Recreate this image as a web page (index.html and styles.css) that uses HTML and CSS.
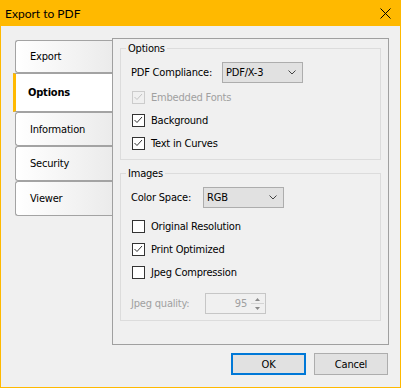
FILE: index.html
```html
<!DOCTYPE html>
<html>
<head>
<meta charset="utf-8">
<link rel="stylesheet" href="styles.css">
</head>
<body>
<div class="window">
  <div class="titlebar">
    <span class="title">Export to PDF</span>
    <svg class="close" width="11" height="11" viewBox="0 0 11 11"><path d="M0.5 0.5 L10.5 10.5 M10.5 0.5 L0.5 10.5" stroke="#000" stroke-width="1" fill="none"/></svg>
  </div>
  <div class="content">
    <div class="main">
      <div class="tabs">
        <div class="tab tab-export">Export</div>
        <div class="tab tab-active">Options</div>
        <div class="tab tab-info">Information</div>
        <div class="tab tab-sec">Security</div>
        <div class="tab tab-viewer">Viewer</div>
      </div>
      <div class="panel">
        <div class="group group-options">
          <span class="group-title">Options</span>
          <div class="row row-field">
            <span class="label label-compliance">PDF Compliance:</span>
            <div class="select"><span>PDF/X-3</span><svg class="chev" width="8" height="5" viewBox="0 0 8 5"><path d="M0.5 0.5 L4 4 L7.5 0.5" fill="none" stroke="#444"/></svg></div>
          </div>
          <div class="row row-check first-check disabled">
            <svg class="cb" width="13" height="13" viewBox="0 0 13 13"><rect x="0.5" y="0.5" width="12" height="12" fill="none" stroke="#cccccc"/><path d="M2.5 6 L5 8.5 L10 3" fill="none" stroke="#c4c4c4"/></svg>
            <span>Embedded Fonts</span>
          </div>
          <div class="row row-check">
            <svg class="cb" width="13" height="13" viewBox="0 0 13 13"><rect x="0.5" y="0.5" width="12" height="12" fill="#fff" stroke="#333"/><path d="M2.5 6 L5 8.5 L10 3" fill="none" stroke="#333"/></svg>
            <span>Background</span>
          </div>
          <div class="row row-check">
            <svg class="cb" width="13" height="13" viewBox="0 0 13 13"><rect x="0.5" y="0.5" width="12" height="12" fill="#fff" stroke="#333"/><path d="M2.5 6 L5 8.5 L10 3" fill="none" stroke="#333"/></svg>
            <span>Text in Curves</span>
          </div>
        </div>
        <div class="group group-images">
          <span class="group-title">Images</span>
          <div class="row row-field">
            <span class="label label-color">Color Space:</span>
            <div class="select"><span>RGB</span><svg class="chev" width="8" height="5" viewBox="0 0 8 5"><path d="M0.5 0.5 L4 4 L7.5 0.5" fill="none" stroke="#444"/></svg></div>
          </div>
          <div class="row row-check first-check-img">
            <svg class="cb" width="13" height="13" viewBox="0 0 13 13"><rect x="0.5" y="0.5" width="12" height="12" fill="#fff" stroke="#333"/></svg>
            <span>Original Resolution</span>
          </div>
          <div class="row row-check">
            <svg class="cb" width="13" height="13" viewBox="0 0 13 13"><rect x="0.5" y="0.5" width="12" height="12" fill="#fff" stroke="#333"/><path d="M2.5 6 L5 8.5 L10 3" fill="none" stroke="#333"/></svg>
            <span>Print Optimized</span>
          </div>
          <div class="row row-check">
            <svg class="cb" width="13" height="13" viewBox="0 0 13 13"><rect x="0.5" y="0.5" width="12" height="12" fill="#fff" stroke="#333"/></svg>
            <span>Jpeg Compression</span>
          </div>
          <div class="row row-field row-spin disabled">
            <span class="label label-quality">Jpeg quality:</span>
            <div class="spin">
              <span class="spin-value">95</span>
              <div class="spin-btns">
                <div class="spin-btn"><svg width="5" height="3" viewBox="0 0 5 3"><path d="M2.5 0 L5 3 L0 3 Z" fill="#8a8a8a"/></svg></div>
                <div class="spin-btn spin-down"><svg width="5" height="3" viewBox="0 0 5 3"><path d="M0 0 L5 0 L2.5 3 Z" fill="#8a8a8a"/></svg></div>
              </div>
            </div>
          </div>
        </div>
      </div>
    </div>
    <div class="buttons">
      <button class="btn btn-default">OK</button>
      <button class="btn btn-cancel">Cancel</button>
    </div>
  </div>
</div>
</body>
</html>
```
FILE: styles.css
```css
html, body {
  margin: 0;
  padding: 0;
  background: #f0f0f0;
}
body {
  width: 401px;
  height: 388px;
  overflow: hidden;
  font-family: "DejaVu Sans Condensed", "DejaVu Sans", sans-serif;
  font-size: 11px;
  letter-spacing: -0.2px;
  color: #000;
}
.window {
  width: 401px;
  height: 388px;
  box-sizing: border-box;
  border: 1px solid #ffb900;
  border-top: 0;
  display: flex;
  flex-direction: column;
}
.titlebar {
  height: 26px;
  flex: none;
  background: #ffb900;
  display: flex;
  align-items: center;
  justify-content: space-between;
  padding-left: 4px;
}
.title {
  font-family: Lato, "Noto Sans", sans-serif;
  font-size: 12px;
  letter-spacing: 0;
  line-height: 15px;
}
.close {
  margin-right: 9px;
  margin-top: 1px;
}
.content {
  flex: 1;
  display: flex;
  flex-direction: column;
  padding: 12px 11px 0 14px;
}
.main {
  display: flex;
  align-items: flex-start;
}
.tabs {
  margin-top: 2px;
  display: flex;
  flex-direction: column;
}
.tab {
  box-sizing: border-box;
  width: 97px;
  border: 1px solid #a3a3a3;
  border-right: 0;
  border-radius: 3px 0 0 3px;
  background: linear-gradient(to right, #ffffff, #ebebeb);
  display: flex;
  align-items: center;
  padding-left: 14px;
}
.tab-export { height: 33px; }
.tab-active {
  height: 39px;
  width: 99px;
  margin-left: -2px;
  background: #fff;
  border-left: 3px solid #ffb900;
  border-radius: 0;
  padding-left: 12px;
  font-weight: bold;
}
.tab-info { height: 34px; }
.tab-sec { height: 35px; }
.tab-viewer { height: 35px; }
.panel {
  box-sizing: border-box;
  width: 277px;
  height: 307px;
  border: 1px solid #a0a0a0;
  padding: 9px 7px 0 7px;
  display: flex;
  flex-direction: column;
}
.group {
  border: 1px solid #dcdcdc;
  display: flex;
  flex-direction: column;
}
.group-options {
  padding-bottom: 4px;
}
.group-images {
  margin-top: 13px;
  padding-bottom: 6px;
}
.group-title {
  align-self: flex-start;
  margin: -8px 0 0 5px;
  padding: 0 2px;
  line-height: 15px;
  background: #f0f0f0;
}
.row {
  display: flex;
  align-items: center;
}
.row-field {
  height: 21px;
  margin-top: 6px;
  padding-left: 10px;
}
.row-check {
  height: 23px;
  padding-left: 11px;
}
.first-check { margin-top: 3px; }
.first-check-img { margin-top: 7px; }
.row-spin { margin-top: 9px; }
.cb {
  margin-right: 6px;
  flex: none;
}
.disabled { color: #a0a0a0; }
.label-compliance { width: 91px; }
.label-color { width: 72px; }
.label-quality { width: 74px; }
.select {
  box-sizing: border-box;
  width: 81px;
  height: 21px;
  border: 1px solid #adadad;
  background: #e1e1e1;
  display: flex;
  align-items: center;
  justify-content: space-between;
  padding: 0 6px 0 3px;
}
.spin {
  box-sizing: border-box;
  width: 61px;
  height: 21px;
  border: 1px solid #c6c6c6;
  background: #f0f0f0;
  display: flex;
  align-items: stretch;
}
.spin-value {
  flex: 1;
  text-align: right;
  padding-right: 4px;
  display: flex;
  align-items: center;
  justify-content: flex-end;
}
.spin-btns {
  width: 13px;
  display: flex;
  flex-direction: column;
  padding: 1px 1px 1px 0;
}
.spin-btn {
  flex: 1;
  display: flex;
  align-items: center;
  justify-content: center;
}
.spin-down {
  border-top: 1px solid #d4d4d4;
}
.buttons {
  display: flex;
  justify-content: flex-end;
  gap: 8px;
  margin-top: 8px;
  padding-right: 1px;
}
.btn {
  box-sizing: border-box;
  height: 22px;
  font-family: inherit;
  font-size: 11px;
  letter-spacing: -0.2px;
  color: #000;
  background: #e1e1e1;
  border: 1px solid #adadad;
  padding: 0;
  margin: 0;
}
.btn-default {
  width: 75px;
  border: 2px solid #0078d7;
}
.btn-cancel {
  width: 74px;
}
```
